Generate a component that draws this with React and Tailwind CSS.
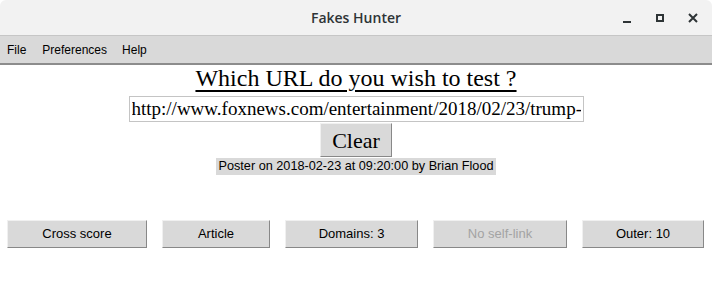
import React from "react";

const tkFont = { fontFamily: '"Liberation Sans", Arial, sans-serif' };
const serif = { fontFamily: '"Liberation Serif", "Times New Roman", serif' };

const TkButton = ({ children, width, disabled }) => (
  <button
    className={`h-[28px] bg-[#d9d9d9] border border-t-[#f0f0f0] border-l-[#f0f0f0] border-r-[#888] border-b-[#888] text-[13px] ${
      disabled ? "text-[#a3a3a3]" : "text-black"
    } ${width}`}
    style={tkFont}
  >
    {children}
  </button>
);

const App = () => {
  return (
    <div className="w-[712px] h-[296px] bg-white overflow-hidden flex flex-col">
      {/* Title bar */}
      <div className="h-[36px] bg-[#f2f2f2] border-b border-[#c6c6c6] rounded-t-[6px] flex items-center relative shrink-0">
        <div
          className="flex-1 text-center text-[14px] font-semibold text-[#2e3436]"
          style={{ fontFamily: '"Open Sans", "Noto Sans", sans-serif' }}
        >
          Fakes Hunter
        </div>
        <div className="absolute right-0 top-0 h-full flex items-center pr-[3px]">
          <div className="w-[33px] flex justify-center">
            <div className="w-[8px] h-[2px] bg-[#2e3436] mt-[8px]" />
          </div>
          <div className="w-[33px] flex justify-center">
            <div className="w-[8px] h-[8px] border-2 border-[#2e3436]" />
          </div>
          <div className="w-[33px] flex justify-center">
            <svg width="10" height="10" viewBox="0 0 10 10">
              <path d="M1 1 L9 9 M9 1 L1 9" stroke="#2e3436" strokeWidth="2" />
            </svg>
          </div>
        </div>
      </div>

      {/* Menu bar */}
      <div
        className="h-[29px] bg-[#d9d9d9] border-b-2 border-[#8c8c8c] flex items-center text-[12px] text-black shrink-0"
        style={tkFont}
      >
        <span className="ml-[7px]">File</span>
        <span className="ml-[16px]">Preferences</span>
        <span className="ml-[15px]">Help</span>
      </div>

      {/* Main */}
      <div className="flex flex-col items-center">
        <div className="text-[24px] leading-[27px] underline underline-offset-[4px] decoration-[2px] text-black" style={serif}>
          Which URL do you wish to test ?
        </div>
        <input
          readOnly
          value="http://www.foxnews.com/entertainment/2018/02/23/trump-says-oscars-ratings"
          className="mt-[4px] w-[455px] h-[26px] border border-[#c4c4c4] bg-white px-[2px] text-[19px] text-black outline-none"
          style={serif}
        />
        <button
          className="mt-[1px] w-[72px] h-[34px] bg-[#d9d9d9] border border-t-[#f0f0f0] border-l-[#f0f0f0] border-r-[#888] border-b-[#888] text-[22px] text-black"
          style={serif}
        >
          Clear
        </button>
        <div className="mt-[1px] h-[17px] px-[2px] bg-[#d9d9d9] text-[12.7px] leading-[17px] text-black" style={tkFont}>
          Poster on 2018-02-23 at 09:20:00 by Brian Flood
        </div>
      </div>

      {/* Bottom buttons */}
      <div className="mt-[45px] flex pl-[7px] gap-[15px]">
        <TkButton width="w-[140px]">Cross score</TkButton>
        <TkButton width="w-[108px]">Article</TkButton>
        <TkButton width="w-[133px]">Domains: 3</TkButton>
        <TkButton width="w-[134px]" disabled>No self-link</TkButton>
        <TkButton width="w-[122px]">Outer: 10</TkButton>
      </div>
    </div>
  );
};

export default App;
